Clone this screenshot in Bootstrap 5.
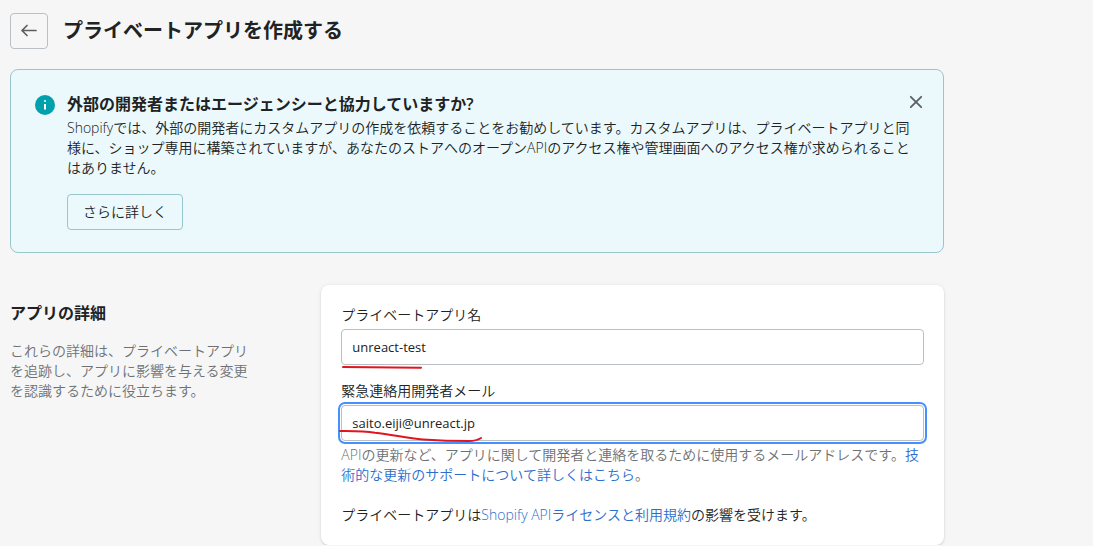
<!DOCTYPE html>
<html lang="ja">
<head>
<meta charset="utf-8">
<meta name="viewport" content="width=device-width, initial-scale=1">
<title>プライベートアプリを作成する</title>
<link href="https://cdn.jsdelivr.net/npm/bootstrap@5.3.0/dist/css/bootstrap.min.css" rel="stylesheet">
<style>
  body {
    font-family: "Open Sans", "Noto Sans CJK JP", sans-serif;
    font-size: 14px;
    font-weight: 350;
    line-height: 20px;
    color: #202223;
    background: #f6f6f6;
  }
  a { color: #2c6ecb; text-decoration: none; }
  .page-shell { max-width: 954px; padding: 13px 10px 0; }
  .page-head { gap: 15px; margin-bottom: 20px; }
  .page-title { font-size: 20px; line-height: 28px; font-weight: 600; }
  .section-title { font-size: 16px; line-height: 24px; font-weight: 600; }
  .back-btn {
    width: 38px; height: 36px;
    border: 1px solid #babfc3; border-radius: 4px;
    background: transparent;
  }
  .info-banner {
    gap: 12px;
    padding: 24px 17px 22px 24px;
    margin-bottom: 32px;
    background: #ebf9fc;
    border: 1px solid #98c6cd;
    border-radius: 8px;
  }
  .info-icon { margin-top: 1px; }
  .banner-title { font-size: 16px; line-height: 20px; font-weight: 600; }
  .close-btn { width: 20px; height: 16px; border: 0; background: none; }
  .more-btn {
    height: 36px; padding: 0 15px;
    font-size: 14px; font-weight: 350; line-height: 20px; color: #202223;
    border: 1px solid #98c6cd; border-radius: 4px;
  }
  .intro { padding-right: 64px; }
  .form-panel {
    padding: 20px;
    background: #fff;
    border-radius: 8px;
    box-shadow: 0 0 5px rgba(23, 24, 24, .05), 0 1px 2px rgba(0, 0, 0, .15);
  }
  .field-input {
    height: 36px; padding: 0 10px;
    font-size: 13px; line-height: 20px; color: #202223;
    border: 1px solid #babfc3; border-radius: 4px;
  }
  .field-input:focus, .field-input.is-active {
    border-color: #babfc3;
    box-shadow: 0 0 0 1px #fff, 0 0 0 3px #458fff;
  }
  .hint { color: #6d7175; }
  .terms { margin-top: 20px; }
  .pen-mark { left: -2px; top: 20px; pointer-events: none; }
</style>
</head>
<body>
<div class="page-shell">
  <header class="page-head d-flex align-items-center">
    <button type="button" class="back-btn d-flex align-items-center justify-content-center p-0" aria-label="戻る">
      <svg width="20" height="20" viewBox="0 0 20 20" fill="none" stroke="#5c5f62" stroke-width="1.700" stroke-linecap="round" stroke-linejoin="round"><path d="M17 9.500H3M8 4.500l-5 5 5 5"/></svg>
    </button>
    <h1 class="page-title mb-0">プライベートアプリを作成する</h1>
  </header>

  <section class="info-banner d-flex align-items-start">
    <svg class="info-icon flex-shrink-0" width="20" height="20" viewBox="0 0 20 20"><circle cx="10" cy="10" r="10" fill="#00a0ac"/><circle cx="10" cy="6" r="1" fill="#fff"/><path d="M9 9h2v5.500H9z" fill="#fff"/></svg>
    <div class="flex-grow-1">
      <div class="d-flex justify-content-between align-items-start mb-1">
        <h2 class="banner-title mb-0">外部の開発者またはエージェンシーと協力していますか?</h2>
        <button type="button" class="close-btn d-flex align-items-center justify-content-center p-0" aria-label="閉じる">
          <svg width="14" height="14" viewBox="0 0 14 14" stroke="#5c5f62" stroke-width="1.800" stroke-linecap="round"><path d="M1.800 1.800l10.400 10.400M12.200 1.800l-10.400 10.400"/></svg>
        </button>
      </div>
      <p class="mb-3 pe-2">Shopifyでは、外部の開発者にカスタムアプリの作成を依頼することをお勧めしています。カスタムアプリは、プライベートアプリと同様に、ショップ専用に構築されていますが、あなたのストアへのオープンAPIのアクセス権や管理画面へのアクセス権が求められることはありません。</p>
      <button type="button" class="btn more-btn">さらに詳しく</button>
    </div>
  </section>

  <div class="row g-0">
    <div class="col-4 intro pt-3">
      <h2 class="section-title mb-3">アプリの詳細</h2>
      <p class="hint mb-0">これらの詳細は、プライベートアプリを追跡し、アプリに影響を与える変更を認識するために役立ちます。</p>
    </div>
    <div class="col-8">
      <form class="form-panel">
        <div class="mb-3">
          <label class="d-block mb-1" for="appName">プライベートアプリ名</label>
          <div class="position-relative">
            <input type="text" id="appName" class="form-control field-input" value="unreact-test">
            <svg class="pen-mark position-absolute" width="150" height="24" fill="none" stroke="#e0161f" stroke-width="2" stroke-linecap="round"><path d="M4 18L82 18.800"/></svg>
          </div>
        </div>
        <div>
          <label class="d-block mb-1" for="devMail">緊急連絡用開発者メール</label>
          <div class="position-relative">
            <input type="email" id="devMail" class="form-control field-input is-active" value="saito.eiji@unreact.jp" aria-describedby="mailHint">
            <svg class="pen-mark position-absolute" width="150" height="24" fill="none" stroke="#e0161f" stroke-width="2" stroke-linecap="round" stroke-linejoin="round"><path d="M1 6C12 6.200 24 6 36 7.800C54 9.800 68 13.200 84 14.500C98 15.400 114 16 130 16Q137 16 142 13"/></svg>
          </div>
          <p id="mailHint" class="hint mt-1 mb-0">APIの更新など、アプリに関して開発者と連絡を取るために使用するメールアドレスです。<a href="#">技術的な更新のサポートについて詳しくはこちら</a>。</p>
        </div>
        <p class="terms mb-0">プライベートアプリは<a href="#">Shopify APIライセンスと利用規約</a>の影響を受けます。</p>
      </form>
    </div>
  </div>
</div>
<script src="https://cdn.jsdelivr.net/npm/bootstrap@5.3.0/dist/js/bootstrap.bundle.min.js"></script>
</body>
</html>
